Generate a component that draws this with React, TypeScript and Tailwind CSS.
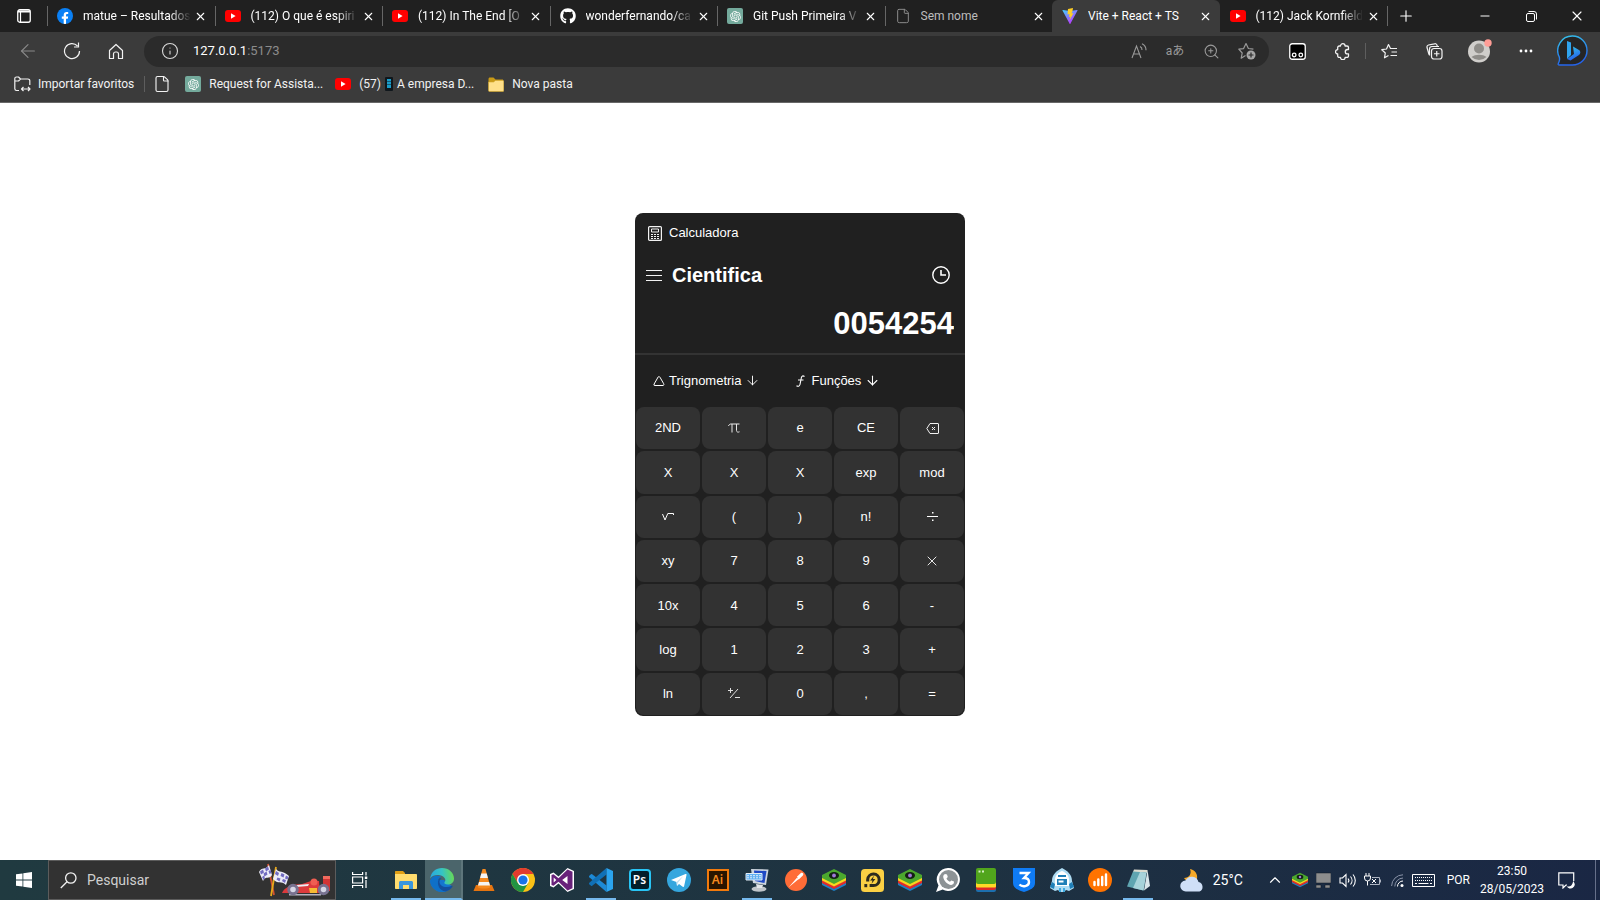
import type { ReactNode } from "react";
import { ArrowLeft, ArrowDown, File, X, Plus, Minus, Info, ZoomIn, ChevronUp, Triangle } from "lucide-react";
import { FaGithub, FaFacebookF } from "react-icons/fa";
import { RiOpenaiFill } from "react-icons/ri";

/* ---------- browser icons ---------- */

const YouTube = () => (
  <svg width="16" height="12" viewBox="0 0 16 12" aria-hidden="true">
    <rect width="16" height="12" rx="3" fill="#ff0000" />
    <path d="M6 3.3v5.4L10.6 6z" fill="#fff" />
  </svg>
);

const Facebook = () => (
  <span className="flex size-4 items-end justify-center overflow-hidden rounded-full bg-[#0a80f5] text-white">
    <FaFacebookF size={12} />
  </span>
);

const OpenAi = () => (
  <span className="flex size-4 items-center justify-center rounded-xs bg-[#74aa9c] text-white">
    <RiOpenaiFill size={13} />
  </span>
);

const Vite = () => (
  <svg width="16" height="16" viewBox="0 0 32 32" aria-hidden="true">
    <defs>
      <linearGradient id="vite-a" x1="0" y1="0" x2="0.6" y2="1">
        <stop offset="0" stopColor="#41d1ff" />
        <stop offset="1" stopColor="#bd34fe" />
      </linearGradient>
    </defs>
    <path d="M1 5l14 26a1 1 0 0 0 2 0L31 5c.5-1-.3-1.300-1-1.200L16 6 2 3.800C1.200 3.700.5 4.200 1 5z" fill="url(#vite-a)" />
    <path d="M22 0l-10 2-1 11 4-1-1 6 3-1-2 8 8-15-4 1 2-5z" fill="#ffcf25" />
  </svg>
);

const TabMenuIcon = () => (
  <svg width="14" height="14" viewBox="0 0 14 14" fill="none" stroke="#fff" aria-hidden="true">
    <rect x="0.75" y="0.75" width="12.500" height="12.500" rx="2" strokeWidth="1.300" />
    <path d="M1 2.500h12" strokeWidth="2" />
    <path d="M3.500 3v10" strokeWidth="1.200" />
  </svg>
);

const RestoreIcon = () => (
  <svg width="11" height="11" viewBox="0 0 11 11" fill="none" stroke="#fff" aria-hidden="true">
    <rect x="0.5" y="2.500" width="8" height="8" rx="1.500" />
    <path d="M2.500 .5h5.500a2.500 2.500 0 0 1 2.500 2.500v5.500" />
  </svg>
);

const ReloadIcon = () => (
  <svg width="18" height="18" viewBox="0 0 18 18" fill="none" stroke="#f2f2f2" strokeWidth="1.200" aria-hidden="true">
    <path d="M16.500 9A7.500 7.500 0 1 1 14.500 4M15.500 .5v4.500h-4.500" />
  </svg>
);

const HomeIcon = () => (
  <svg width="16" height="17" viewBox="0 0 16 17" fill="none" stroke="#f2f2f2" strokeWidth="1.200" strokeLinejoin="round" aria-hidden="true">
    <path d="M1.500 7.500L8 1.500l6.500 6v8h-4V11a2 2 0 0 0-2-2h-1a2 2 0 0 0-2 2v4.500h-4z" />
  </svg>
);

const ReadAloudIcon = () => (
  <svg width="17" height="16" viewBox="0 0 17 16" fill="none" stroke="#9a9a9a" strokeWidth="1.100" aria-hidden="true">
    <path d="M1 15L5.500 3 10 15M2.700 11h5.700M9 3.500a3.500 3.500 0 0 1 2 3.500M11 .8a7 7 0 0 1 4 6.500" />
  </svg>
);

const StarAddIcon = () => (
  <svg width="18" height="18" viewBox="0 0 18 18" fill="none" stroke="#9a9a9a" strokeWidth="1.200" strokeLinejoin="round" aria-hidden="true">
    <path d="M7.500 13.500l-4.300 2.700 1-5.200L.8 7.200l4.800-.6L8 1.500l2.400 5 5 .7" />
    <circle cx="13" cy="13" r="4.500" fill="#a6a6a6" stroke="none" />
    <path d="M13 10.500v5M10.500 13h5" stroke="#2b2b2b" />
  </svg>
);

const ExtensionIcon = () => (
  <svg width="17" height="17" viewBox="0 0 17 17" aria-hidden="true">
    <rect x="0.75" y="0.75" width="15.500" height="15.500" rx="2.500" fill="#000" stroke="#fff" strokeWidth="1.300" />
    <g fill="none" stroke="#fff" strokeWidth="1.300">
      <circle cx="5.200" cy="12" r="1.800" />
      <circle cx="11.800" cy="12" r="1.800" />
    </g>
  </svg>
);

const PuzzleIcon = () => (
  <svg width="15" height="17" viewBox="0 0 15 17" fill="none" stroke="#f2f2f2" strokeWidth="1.300" strokeLinejoin="round" aria-hidden="true">
    <path d="M5.500 3a2.300 2.300 0 0 1 4.600 0H12a1.500 1.500 0 0 1 1.500 1.500V6.500h-1a2.200 2.200 0 0 0 0 4.400h1v2a1.500 1.500 0 0 1-1.500 1.500h-1.900a2.300 2.300 0 0 1-4.600 0H4.200a1.500 1.500 0 0 1-1.500-1.500V11a2.200 2.200 0 0 1 0-4.400V4.500A1.500 1.500 0 0 1 4.200 3z" />
  </svg>
);

const FavoritesIcon = () => (
  <svg width="17" height="16" viewBox="0 0 17 16" fill="none" stroke="#f2f2f2" strokeWidth="1.200" strokeLinejoin="round" aria-hidden="true">
    <path d="M7.500 12.500l-4 2.300.8-4.800L.8 6.700l4.700-.7L7.500 1.500l2 4h6.500M10.500 9H16M9.500 12.500H16" />
  </svg>
);

const CollectionsIcon = () => (
  <svg width="17" height="17" viewBox="0 0 17 17" fill="none" stroke="#f2f2f2" strokeWidth="1.200" aria-hidden="true">
    <rect x="5.500" y="5.500" width="10.500" height="10.500" rx="2.500" />
    <path d="M10.750 8v5.500M8 10.750h5.500M3 11.500L1 4.500A2.200 2.200 0 0 1 2.500 2L8.500.8A2 2 0 0 1 11 2.200l.3 1.300M3.500 12.500V6a2.500 2.500 0 0 1 2.500-2.500h7" />
  </svg>
);

const Avatar = () => (
  <svg width="24" height="24" viewBox="0 0 24 24" aria-hidden="true">
    <circle cx="11" cy="12.500" r="11" fill="#d0cecb" />
    <circle cx="11" cy="9.500" r="5" fill="#8f8d89" />
    <path d="M3.500 18c4-3 11-3 15 0a11 11 0 0 1-15 0z" fill="#8f8d89" />
    <circle cx="20" cy="4" r="3.700" fill="#ff9d96" />
  </svg>
);

const Bing = () => (
  <svg width="31" height="32" viewBox="0 0 31 32" aria-hidden="true">
    <defs>
      <linearGradient id="bing-a" x1="0" y1="0" x2="0.3" y2="1">
        <stop offset="0" stopColor="#36c6ea" />
        <stop offset="1" stopColor="#2463eb" />
      </linearGradient>
    </defs>
    <path d="M15.500 1a14.500 14.500 0 1 1 0 29H2c-1 0-1-1-.6-1.600 1.300-2.400 1.600-3.900.9-6.400A14.500 14.500 0 0 1 15.500 1z" fill="#252525" stroke="url(#bing-a)" strokeWidth="1.400" />
    <path d="M10 6l4 1.500V20l-4 4z" fill="#2fa4ef" />
    <path d="M16 11.500l6 3.500c2 1.500 1.500 4 0 5l-8.500 5.500L10 24l7-5z" fill="url(#bing-a)" />
  </svg>
);

const ImportIcon = () => (
  <svg width="17" height="16" viewBox="0 0 17 16" fill="none" stroke="#f2f2f2" strokeWidth="1.200" strokeLinejoin="round" aria-hidden="true">
    <path d="M5 14.500H2.500A1.800 1.800 0 0 1 .8 12.800V2.500C.8 1.500 1.500 1 2.500 1h2L6.500 3H14a1.800 1.800 0 0 1 1.800 1.800V9M1 5h3.500l2-2M7.500 13H16M9.500 11l-2 2 2 2M14 11l2 2-2 2" />
  </svg>
);

const FolderIcon = () => (
  <svg width="16" height="15" viewBox="0 0 16 15" aria-hidden="true">
    <path d="M.5 2c0-.8.5-1.500 1.500-1.500h3.500l2 2H15v3H.5z" fill="#c99a16" />
    <path d="M.5 5h5l2-1.500H15c.5 0 .8.300.8.8V13.500c0 .5-.3 1-.8 1H1.500c-.6 0-1-.5-1-1z" fill="#ffe08a" stroke="#d1a62b" strokeWidth="0.600" />
  </svg>
);

const PhoneIcon = () => (
  <svg width="8" height="14" viewBox="0 0 8 14" aria-hidden="true">
    <rect width="8" height="14" rx="1" fill="#10171c" />
    <path d="M2 2h4v2.500H2zM2 5h4v2.500H2zM2 8h4v3H2z" fill="#1a9cc9" />
  </svg>
);

/* ---------- taskbar icons ---------- */

const Svg = ({ children, size = 24, box = 24 }: { children: ReactNode; size?: number; box?: number }) => (
  <svg width={size} height={size} viewBox={`0 0 ${box} ${box}`} aria-hidden="true">
    {children}
  </svg>
);

const Explorer = () => (
  <Svg>
    <path d="M1 4c0-.6.4-1 1-1h7l2 2v4H1z" fill="#e09f15" />
    <path d="M1 6h21c.5 0 1 .4 1 1v13c0 .6-.5 1-1 1H2c-.6 0-1-.4-1-1z" fill="#ffdc6e" />
    <path d="M5 21v-6.500c0-.8.7-1.500 1.500-1.500h11c.8 0 1.500.7 1.500 1.500V21h-4v-4H9v4z" fill="#3a96dd" />
  </Svg>
);

const Edge = () => (
  <Svg>
    <defs>
      <linearGradient id="edge-a" x1="0" y1="0.400" x2="1" y2="0.300">
        <stop offset="0" stopColor="#28a9e0" />
        <stop offset="0.500" stopColor="#35c3c5" />
        <stop offset="1" stopColor="#6ada50" />
      </linearGradient>
    </defs>
    <path d="M0 12A12 12 0 0 0 12 24c4.500 0 8-2 10.300-5.500L14 12z" fill="#1476cf" />
    <path d="M.2 10.500C1 4 6 0 12 0c7 0 12 5 12 10.500 0 4-3 6-6.200 6-2.800 0-4-1.200-3.300-2.200 1-1.300 1-2.300.5-3.500C13.500 7 4 5 .2 10.500z" fill="url(#edge-a)" />
    <path d="M8.500 11c-2.500 5.500 1 11.500 7 12.300C9 25.500 2 21 .3 14.500-.5 8 7 6.500 11.500 8.500 10 9 9 9.800 8.500 11z" fill="#0f70c8" />
    <path d="M8.500 11.500c-2 5 1 11.500 7 12 3-.7 5.500-2.500 7-5 .3-.6-.2-1-.7-.7-6 3-12.500.5-12.300-4.300 0-1.500 1-2.500 2-3-1.300-.5-2.500 0-3 1z" fill="#134f9e" />
  </Svg>
);

const Vlc = () => (
  <Svg>
    <path d="M4 17h16l2.500 6H1.500z" fill="#e57410" />
    <path d="M10.500 1h3l5 18c-2 2-11 2-13 0z" fill="#f58a1f" />
    <path d="M9.300 5.500h5.400l1.200 4.500H8.100zM7 14h10l1 3.500H6z" fill="#f4f4f4" />
  </Svg>
);

const Chrome = () => (
  <Svg>
    <circle cx="12" cy="12" r="12" fill="#fbc116" />
    <path d="M12 6h10.400A12 12 0 0 0 1.600 6l5.200 9z" fill="#e33b2e" />
    <path d="M1.600 6A12 12 0 0 0 12 24l5.200-9L12 17.500 6.800 15z" fill="#229342" />
    <circle cx="12" cy="12" r="6" fill="#fff" />
    <circle cx="12" cy="12" r="4.600" fill="#1a73e8" />
  </Svg>
);

const VisualStudio = () => (
  <Svg>
    <path d="M17.500 0L24 3v18l-6.500 3-9-8.500-5 4L0 18V6l3.500-1.500 5 4z" fill="#fff" />
    <path d="M17.500 1.500l5 2.300v16.400l-5 2.300-9-8.700-5 4L1.500 17V7l2-.8 5 4zM17.500 8l-5.300 4 5.300 4zM3.700 9.500v5l2.600-2.500z" fill="#68217a" fillRule="evenodd" />
  </Svg>
);

const VsCode = () => (
  <Svg>
    <path d="M2 6.300L.3 7.800a1 1 0 0 0 0 1.400L17.500 24v-6.500L3.200 6.300a1 1 0 0 0-1.200 0z" fill="#1d8ad6" />
    <path d="M2 17.700L.3 16.200a1 1 0 0 1 0-1.400L17.500 0v6.500L3.200 17.700a1 1 0 0 1-1.200 0z" fill="#1070b6" />
    <path d="M17.500 0L24 3v18l-6.500 3z" fill="#2ba4ef" />
  </Svg>
);

const AdobeIcon = ({ text, variant }: { text: string; variant: "ps" | "ai" }) => (
  <span
    className={
      variant === "ps"
        ? "flex size-[22px] items-center justify-center rounded-sm border-2 border-[#29c5f6] bg-[#021e2b] font-['Noto_Sans',sans-serif] text-xs font-semibold text-white"
        : "flex size-[22px] items-center justify-center border-2 border-[#f27a0c] bg-[#2a1500] font-['Noto_Sans',sans-serif] text-xs font-semibold text-[#f68a1f]"
    }
  >
    {text}
  </span>
);

const Telegram = () => (
  <Svg>
    <circle cx="12" cy="12" r="12" fill="#35a6de" />
    <path d="M4 12l14.500-6c.7-.2 1.200.2 1 1l-2.400 11.200c-.2.800-.7 1-1.400.6L12 16l-2 2-.5-4z" fill="#fff" />
    <path d="M9.500 14l7-6.300-5.700 7.300L10 18z" fill="#c4dfee" />
  </Svg>
);

const Computer = () => (
  <Svg>
    <path d="M6 1l17.500.5L21 17 8 15z" fill="#cdd5de" />
    <path d="M9 2.500l12.500.5-2 12L10 13z" fill="#1e49c4" />
    <path d="M1 5.500h16V12H1z" fill="#5fb0f3" stroke="#e2edf7" />
    <path d="M2 7.700h14M2 9.800h14" stroke="#e2edf7" strokeDasharray="2 1" />
    <ellipse cx="14" cy="21" rx="7.500" ry="2.800" fill="#bfc4c9" />
    <path d="M11 16l7 1-1 3h-5z" fill="#e3e6e9" />
  </Svg>
);

const Postman = () => (
  <Svg size={22}>
    <circle cx="12" cy="12" r="12" fill="#ff6c37" />
    <path d="M4 20L13 9.500l2 1.500zM13 8.500l4-4c2-1.500 4 .5 2.500 2.500L15 11.500z" fill="#fff" />
  </Svg>
);

const BlueStacks = ({ size = 24 }: { size?: number }) => (
  <Svg size={size}>
    <path d="M0 14.500l12 6 12-6v2.500l-12 6L0 17z" fill="#1d7fc4" />
    <path d="M0 12l12 6 12-6v3l-12 6-12-6z" fill="#e22b2b" />
    <path d="M0 9l12 6 12-6v3.500l-12 6-12-6z" fill="#f8d51f" />
    <path d="M0 7l12-6 12 6v3l-12 6-12-6z" fill="#4ba82e" />
    <ellipse cx="12" cy="7.500" rx="5" ry="3.400" fill="#132014" />
    <circle cx="12" cy="7.500" r="1.900" fill="#9f79d8" />
  </Svg>
);

const LdPlayer = () => (
  <Svg size={23}>
    <rect width="24" height="24" rx="4" fill="#fbd044" />
    <path d="M7 13V11a6 6 0 1 1 6 6.300H9" fill="none" stroke="#2d2a1e" strokeWidth="3.200" />
    <path d="M13.500 7l-4 5h2.500l-1 3.500 4-5h-2.500z" fill="#2d2a1e" />
    <path d="M3.500 15.700h3v3.300h-3z" fill="#2d2a1e" />
  </Svg>
);

const WhatsApp = () => (
  <Svg>
    <path d="M12.500 0a11.500 11.500 0 1 1-5.800 21.500L0 24l2.500-6.500A11.500 11.500 0 0 1 12.500 0z" fill="#fff" />
    <circle cx="12.500" cy="11.500" r="9.500" fill="#8d9396" />
    <path d="M9 6l2 .5.800 2.500-1.300 1.500c.8 1.700 2 2.700 3.500 3.300l1.300-1.400 2.700 1.200c.2 1.900-1 3.300-2.800 3.400-4-.5-7.500-4.500-8-8C7.200 7.500 8 6.300 9 6z" fill="#fff" />
  </Svg>
);

const GreenStack = () => (
  <Svg>
    <rect x="2" y="15" width="20" height="9" rx="2" fill="#1d6fae" />
    <rect x="2" y="14" width="20" height="8" rx="2" fill="#dc2929" />
    <rect x="2" y="12" width="20" height="7.500" rx="1" fill="#ffd926" />
    <rect x="2" y="0" width="20" height="16" rx="2" fill="#51a51c" />
    <path d="M4.500 2.500h2v2h-2zM8 2.500h2v2H8z" fill="#d7f0c5" />
  </Svg>
);

const Three = () => (
  <Svg>
    <path d="M1 0h22v15c0 5-5 7-11 9C6 22 1 20 1 15z" fill="#0f7bf4" />
    <path d="M7.500 5h9l-4.500 5c3.500 0 5 1.800 5 4 0 4.500-6.500 5.500-9.500 2.500" fill="none" stroke="#fff" strokeWidth="2.400" />
  </Svg>
);

const Rocket = () => (
  <Svg>
    <path d="M12 0c6 3 10 7 10 13l2 7-5 3-3-1-2 2h-4l-2-2-3 1-5-3 2-7C2 7 6 3 12 0z" fill="#aedcf4" />
    <path d="M12 3c5 2 7 5 7 9v6H5v-6c0-4 2-7 7-9z" fill="#fff" />
    <path d="M8 7h8v2H8zM7 11h10v6H7zM2 14l3 2-1 5-4-2zM22 14l-3 2 1 5 4-2z" fill="#1f7fb8" />
    <path d="M8.500 12.500h5v2h-5z" fill="#fff" />
    <path d="M9 20h2v4H9zM13 20h2v4h-2z" fill="#3faae0" />
  </Svg>
);

const BarsIcon = () => (
  <Svg>
    <circle cx="12" cy="12" r="12" fill="#ff7300" />
    <path d="M6.500 14v3M10.300 11.500v5.500M14.200 9v8M18 6.500V17" stroke="#fff" strokeWidth="2.400" strokeLinecap="round" />
  </Svg>
);

const Notepad = () => (
  <Svg>
    <path d="M8 1.500l13.500 .5-.5 3L7 4z" fill="#dcdcd0" />
    <path d="M21.500 2L24 18l-6 4.500z" fill="#d9e6ea" />
    <path d="M1 18.500L7 3.500l13.500 1-3 18z" fill="#5fa5b1" />
    <path d="M14 4l6.500.5-3 18L7 20z" fill="#a7d3da" />
  </Svg>
);

const RaceArt = () => (
  <svg width="72" height="34" viewBox="0 0 72 34" aria-hidden="true">
    <path d="M9 1l6 31" stroke="#d35230" strokeWidth="1.800" />
    <path d="M17 4l-5 29" stroke="#e8a91b" strokeWidth="1.800" />
    <path d="M10 2C6 8 3 3 0 9l4 9c3-6 6-1 9-6z" fill="#ececf8" />
    <path d="M17 6c3 4 7 1 13 7l-3 9c-5-5-8 0-13-6z" fill="#ececf8" />
    <path d="M1 8.500l3-2 1 3-3 2zM6 5.500l3-2 1 3-3 2zM4.500 10.500l3-2 1 3-3 2zM9.500 8l2-1 1 3-2 1zM3 14l2-1.500 1 3-1.500 1.500zM17 8l3 2-1 3-3-2zM22.500 10l3 1.500-1 3-3-1.500zM18.500 14.500l3 1-1 3-3-2zM24 16l3 1-1 3-3-2zM27 12.500l2.500 1.500-1 2.500-2.500-1z" fill="#716bc0" />
    <path d="M23 30c2-6 12-9 20-9l9-3h8l1 12H25z" fill="#dc3a3c" />
    <path d="M38 22l12-1-1 2-12 1z" fill="#ecebf2" />
    <path d="M50 25h8v5h-7z" fill="#f7bb32" />
    <path d="M64 14h7v14h-7z" fill="#d23334" />
    <path d="M64 13h7v3h-7z" fill="#f26a5d" />
    <circle cx="55" cy="19" r="3.500" fill="#ef5e52" />
    <path d="M30 31h32v1.500H30z" fill="#b3b2be" />
    <g fill="#d7d6e5" stroke="#78718f" strokeWidth="3">
      <circle cx="34" cy="26.500" r="4.300" />
      <circle cx="64.500" cy="26.500" r="4.300" />
    </g>
  </svg>
);

const WindowsLogo = () => (
  <svg width="16" height="16" viewBox="0 0 16 16" fill="#fff" aria-hidden="true">
    <path d="M0 2.300L6.500 1.400v6.200H0zM7.300 1.300L16 0v7.600H7.300zM0 8.400h6.500v6.200L0 13.700zM7.300 8.400H16V16l-8.700-1.300z" />
  </svg>
);

const SearchIcon = () => (
  <svg width="17" height="17" viewBox="0 0 17 17" fill="none" stroke="#f2f2f2" strokeWidth="1.300" aria-hidden="true">
    <circle cx="10.800" cy="6" r="5.200" />
    <path d="M7 9.800L.8 16" />
  </svg>
);

const TaskViewIcon = () => (
  <svg width="16" height="16" viewBox="0 0 16 16" fill="none" stroke="#fff" strokeWidth="1.200" aria-hidden="true">
    <path d="M.6 0v2.500h10V0M.6 16v-2.500h10V16M.6 5h10v6H.6zM14 0v3.500M14 8v8" />
    <path d="M12.800 4.500h2.500V7h-2.500z" fill="#fff" stroke="none" />
  </svg>
);

const Weather = () => (
  <svg width="25" height="24" viewBox="0 0 25 24" aria-hidden="true">
    <path d="M10 1c2 5-1 9-6 9 2 4 9 6 13 1C18 6 15 2 10 1z" fill="#f6a929" />
    <path d="M6 23.500a5.500 5.500 0 0 1-.5-11 7 7 0 0 1 13 1.500 5 5 0 0 1 1 9.500z" fill="#cfdff7" />
  </svg>
);

const SoundIcon = () => (
  <svg width="17" height="15" viewBox="0 0 17 15" fill="none" stroke="#fff" strokeWidth="1.100" aria-hidden="true">
    <path d="M1 5h2.500L7 1.500v12L3.500 10H1zM9 5.500a3 3 0 0 1 0 4M11.500 3.500a6 6 0 0 1 0 8M14 1.500a9 9 0 0 1 0 12" />
  </svg>
);

const BatteryIcon = () => (
  <svg width="17" height="14" viewBox="0 0 17 14" fill="none" stroke="#aeb5c2" aria-hidden="true">
    <path d="M2 0v3M5 0v3M.5 3h6v2a3 3 0 0 1-6 0zM3.500 8v4.500" stroke="#fff" />
    <path d="M8 4.500h7.500v7H6M16.500 6.500v3" />
    <path d="M8 6l4 4M12 6l-4 4" stroke="#fff" />
  </svg>
);

const WifiIcon = () => (
  <svg width="13" height="13" viewBox="0 0 13 13" fill="none" aria-hidden="true">
    <path d="M.6 12A11.400 11.400 0 0 1 12 .8M3.800 12.500A8.500 8.500 0 0 1 12 4" stroke="#8a93a8" />
    <path d="M6.500 12.500A5.500 5.500 0 0 1 12 7" stroke="#fff" />
    <circle cx="11" cy="11.500" r="1.500" fill="#fff" />
  </svg>
);

const KeyboardIcon = () => (
  <svg width="23" height="13" viewBox="0 0 23 13" fill="none" stroke="#fff" aria-hidden="true">
    <path d="M.5.5h22v12H.5z" />
    <path d="M3 3.500h17M3 6.500h17" strokeDasharray="1 1" />
    <path d="M3 9.500h2M6.500 9.500h10M18 9.500h2" />
  </svg>
);

const NotificationIcon = () => (
  <svg width="17" height="17" viewBox="0 0 17 17" fill="none" stroke="#fff" strokeWidth="1.200" aria-hidden="true">
    <path d="M9 13H8l-3 3v-3H.8V.8h14.900V9" />
    <path d="M15.500 10.500a3.500 3.500 0 0 1-5 4.700c2.500 0 4.300-1.700 5-4.700z" fill="#fff" stroke="#fff" />
  </svg>
);

/* ---------- calculator icons ---------- */

const CalculatorIcon = () => (
  <svg width="14" height="15" viewBox="0 0 14 15" fill="none" stroke="#f2f2f2" aria-hidden="true">
    <rect x="0.6" y="0.6" width="12.800" height="13.800" rx="1" strokeWidth="1.200" />
    <path d="M3.500 3h7v3h-7z" />
    <path d="M3 8.500h2M6 8.500h2M9 8.500h2M3 10.500h2M6 10.500h2M9 10.500h2M3 12.500h2M6 12.500h2M9 12.500h2" strokeWidth="1.200" />
  </svg>
);

const PiIcon = () => (
  <svg width="12" height="10" viewBox="0 0 12 10" fill="none" stroke="#e8e8e8" aria-hidden="true">
    <path d="M.5 3C1 1.500 2 1 3 1h8.500M4 1v8.500M8.500 1v6.500c0 1.500 1.500 2 3 1.300" />
  </svg>
);

const BackspaceIcon = () => (
  <svg width="13" height="11" viewBox="0 0 13 11" fill="none" stroke="#f0f0f0" aria-hidden="true">
    <path d="M4 .5h8a.5.5 0 0 1 .5.5v9a.5.500 0 0 1-.5.500H4L.8 5.500z" />
    <path d="M6 4l3 3M9 4L6 7" />
  </svg>
);

const RootIcon = () => (
  <svg width="12" height="8" viewBox="0 0 12 8" fill="none" stroke="#fff" aria-hidden="true">
    <path d="M.5 1l2.500 6L5.800.5h5.700v1.500" />
  </svg>
);

const DivideIcon = () => (
  <svg width="11" height="9" viewBox="0 0 11 9" aria-hidden="true">
    <path d="M0 4h11v1H0zM5 0h1.500v1.500H5zM5 7.500h1.500V9H5z" fill="#fff" />
  </svg>
);

const PlusMinusIcon = () => (
  <svg width="12" height="11" viewBox="0 0 12 11" fill="none" stroke="#e0e0e0" aria-hidden="true">
    <path d="M0 2.500h5M2.500 0v5M10 1L2 10M7 9.500h5" />
  </svg>
);

const ClockIcon = () => (
  <svg width="18" height="18" viewBox="0 0 18 18" fill="none" stroke="#fff" aria-hidden="true">
    <circle cx="9" cy="9" r="8.200" strokeWidth="1.400" />
    <path d="M9 4v5h5" strokeWidth="1.600" />
  </svg>
);

const FunctionIcon = () => (
  <svg width="9" height="12" viewBox="0 0 9 12" fill="none" stroke="#fff" strokeWidth="1.100" aria-hidden="true">
    <path d="M8.500 1.500C7 .3 5.800.8 5.400 2.500L4 9.500C3.600 11.300 2 11.800.5 10.800M2 5h5.500" />
  </svg>
);

/* ---------- data ---------- */

type Tab = { title: string; icon: ReactNode; active?: boolean; dim?: boolean };

const tabs: Tab[] = [
  { title: "matue – Resultados", icon: <Facebook /> },
  { title: "(112) O que é espiri", icon: <YouTube /> },
  { title: "(112) In The End [O", icon: <YouTube /> },
  { title: "wonderfernando/ca", icon: <FaGithub size={16} color="#fff" /> },
  { title: "Git Push Primeira V", icon: <OpenAi /> },
  { title: "Sem nome", icon: <File size={16} color="#8a8a8a" strokeWidth={1.500} />, dim: true },
  { title: "Vite + React + TS", icon: <Vite />, active: true },
  { title: "(112) Jack Kornfield", icon: <YouTube /> },
];

type Key = { name: string; face?: ReactNode };

const keys: Key[] = [
  { name: "2ND" }, { name: "pi", face: <PiIcon /> }, { name: "e" }, { name: "CE" }, { name: "Apagar", face: <BackspaceIcon /> },
  { name: "X" }, { name: "X" }, { name: "X" }, { name: "exp" }, { name: "mod" },
  { name: "Raiz", face: <RootIcon /> }, { name: "(" }, { name: ")" }, { name: "n!" }, { name: "Dividir", face: <DivideIcon /> },
  { name: "xy" }, { name: "7" }, { name: "8" }, { name: "9" }, { name: "Multiplicar", face: <X size={16} strokeWidth={1.500} color="#e8e8e8" /> },
  { name: "10x" }, { name: "4" }, { name: "5" }, { name: "6" }, { name: "-" },
  { name: "log" }, { name: "1" }, { name: "2" }, { name: "3" }, { name: "+" },
  { name: "ln" }, { name: "Mais ou menos", face: <PlusMinusIcon /> }, { name: "0" }, { name: "," }, { name: "=" },
];

type TaskApp = { name: string; icon: ReactNode; open?: boolean };

const leftApps: TaskApp[] = [
  { name: "VLC", icon: <Vlc /> },
  { name: "Chrome", icon: <Chrome /> },
  { name: "Visual Studio", icon: <VisualStudio /> },
  { name: "VS Code", icon: <VsCode />, open: true },
  { name: "Photoshop", icon: <AdobeIcon text="Ps" variant="ps" /> },
  { name: "Telegram", icon: <Telegram /> },
  { name: "Illustrator", icon: <AdobeIcon text="Ai" variant="ai" /> },
  { name: "Computador", icon: <Computer />, open: true },
];

const rightApps: TaskApp[] = [
  { name: "Postman", icon: <Postman /> },
  { name: "BlueStacks", icon: <BlueStacks /> },
  { name: "LDPlayer", icon: <LdPlayer /> },
  { name: "BlueStacks 5", icon: <BlueStacks /> },
  { name: "WhatsApp", icon: <WhatsApp /> },
  { name: "BlueStacks X", icon: <GreenStack /> },
  { name: "3uTools", icon: <Three /> },
  { name: "Foguete", icon: <Rocket /> },
  { name: "Estatísticas", icon: <BarsIcon /> },
  { name: "Bloco de Notas", icon: <Notepad />, open: true },
];

/* ---------- sections ---------- */

const IconButton = ({ label, className, children }: { label: string; className: string; children: ReactNode }) => (
  <button type="button" aria-label={label} className={`flex h-8 shrink-0 items-center justify-center ${className}`}>
    {children}
  </button>
);

function TabStrip() {
  return (
    <div className="flex h-8 items-center bg-[#202020]">
      <IconButton label="Menu de guias" className="w-[47px]"><TabMenuIcon /></IconButton>
      <div className="flex h-8 max-w-[1341px] flex-1" role="tablist">
        {tabs.map((tab, i) => (
          <div
            key={i}
            className={`flex h-8 min-w-0 flex-1 items-center ${tab.active ? "rounded-t-md bg-[#3b3b3b]" : ""}`}
          >
            {!tab.active && !tabs[i - 1]?.active && <span className="-mr-px h-5 w-px shrink-0 bg-[#666]" />}
            <button type="button" role="tab" aria-selected={!!tab.active} className="flex min-w-0 flex-1 items-center gap-2.5 pl-2.5 text-left">
              <span className="flex w-4 shrink-0 justify-center">{tab.icon}</span>
              <span className={`flex-1 overflow-hidden whitespace-nowrap ${tab.active ? "text-white" : tab.dim ? "text-[#bdbdbd]" : "text-white mask-r-from-80%"}`}>
                {tab.title}
              </span>
            </button>
            <button type="button" aria-label={`Fechar ${tab.title}`} className="flex w-6 shrink-0 justify-center pr-1">
              <X size={13} strokeWidth={2} />
            </button>
          </div>
        ))}
        <span className="h-5 w-px shrink-0 self-center bg-[#666]" />
      </div>
      <IconButton label="Nova guia" className="w-9"><Plus size={18} strokeWidth={1.500} /></IconButton>
      <div className="ml-auto flex">
        <IconButton label="Minimizar" className="w-[46px]"><Minus size={14} strokeWidth={1.700} /></IconButton>
        <IconButton label="Restaurar" className="w-[46px]"><RestoreIcon /></IconButton>
        <IconButton label="Fechar janela" className="w-[46px]"><X size={16} strokeWidth={1.700} /></IconButton>
      </div>
    </div>
  );
}

function Toolbar() {
  return (
    <div className="flex h-[38px] items-center pl-1.5 text-[#f2f2f2]">
      <IconButton label="Voltar" className="w-11"><ArrowLeft size={22} strokeWidth={1.200} color="#8a8a8a" /></IconButton>
      <IconButton label="Atualizar" className="w-11"><ReloadIcon /></IconButton>
      <IconButton label="Início" className="w-11"><HomeIcon /></IconButton>
      <div className="ml-1.5 flex h-[31px] flex-1 items-center rounded-full bg-[#2b2b2b] pl-[17px] pr-1">
        <Info size={18} strokeWidth={1.500} className="mr-3.5 text-[#d8d8d8]" />
        <input aria-label="Endereço" defaultValue="127.0.0.1" className="field-sizing-content bg-transparent text-[13px] text-white outline-none" />
        <span className="flex-1 text-[13px] text-[#8b8b8b]">:5173</span>
        <IconButton label="Ler em voz alta" className="w-9"><ReadAloudIcon /></IconButton>
        <IconButton label="Traduzir" className="w-9">
          <span className="text-xs text-[#9a9a9a]">aあ</span>
        </IconButton>
        <IconButton label="Zoom" className="w-9"><ZoomIn size={17} strokeWidth={1.500} color="#9a9a9a" /></IconButton>
        <IconButton label="Adicionar aos favoritos" className="w-9"><StarAddIcon /></IconButton>
      </div>
      <div className="flex shrink-0 items-center pl-1.5">
        <IconButton label="Extensão" className="w-[45px]"><ExtensionIcon /></IconButton>
        <IconButton label="Extensões" className="w-[45px]"><PuzzleIcon /></IconButton>
        <span className="h-4 w-px bg-[#5e5e5e]" />
        <IconButton label="Favoritos" className="w-[46px]"><FavoritesIcon /></IconButton>
        <IconButton label="Coleções" className="w-[45px]"><CollectionsIcon /></IconButton>
        <IconButton label="Perfil" className="w-[46px]"><Avatar /></IconButton>
        <IconButton label="Mais opções" className="w-[46px]">
          <svg width="14" height="4" viewBox="0 0 14 4" fill="#fff" aria-hidden="true">
            <circle cx="2" cy="2" r="1.400" /><circle cx="7" cy="2" r="1.400" /><circle cx="12" cy="2" r="1.400" />
          </svg>
        </IconButton>
        <IconButton label="Bing" className="w-[46px]"><Bing /></IconButton>
        <span className="w-[5px]" />
      </div>
    </div>
  );
}

function Bookmarks() {
  return (
    <nav aria-label="Favoritos" className="flex h-8 items-center pb-1 pl-3.5 text-[#f2f2f2]">
      <button type="button" className="flex items-center gap-[7px]"><ImportIcon />Importar favoritos</button>
      <span className="ml-2.5 mr-2 h-4 w-px bg-[#5e5e5e]" />
      <a href="#pagina" aria-label="Página"><File size={18} strokeWidth={1.500} /></a>
      <a href="#request" className="ml-3.5 flex items-center gap-2"><OpenAi />Request for Assista...</a>
      <a href="#empresa" className="ml-3 flex items-center"><YouTube /><span className="ml-2 mr-1">(57)</span><PhoneIcon /><span className="ml-1">A empresa D...</span></a>
      <a href="#pasta" className="ml-3.5 flex items-center gap-2"><FolderIcon />Nova pasta</a>
    </nav>
  );
}

function Calculator() {
  return (
    <section aria-label="Calculadora" className="flex w-[330px] flex-col rounded-lg bg-[#202020] pb-px font-['Liberation_Sans',Arial,sans-serif] text-[13px] text-white">
      <div className="flex h-10 items-center gap-[7px] pl-[13px]">
        <CalculatorIcon />
        <h1>Calculadora</h1>
      </div>
      <div className="flex h-[43px] items-center pl-[11px] pr-[15px]">
        <button type="button" aria-label="Menu" className="mr-2.5">
          <svg width="16" height="12" viewBox="0 0 16 12" stroke="#f2f2f2" aria-hidden="true"><path d="M0 1.500h16M0 6.500h16M0 11.500h16" /></svg>
        </button>
        <h2 className="text-xl font-bold">Cientifica</h2>
        <button type="button" aria-label="Histórico" className="ml-auto"><ClockIcon /></button>
      </div>
      <input
        aria-label="Visor"
        readOnly
        value="0054254"
        className="h-[59px] w-full border-b-2 border-[#333] bg-transparent pr-[11px] pb-0.5 text-right text-[31px] font-bold outline-none"
      />
      <div className="flex h-[52px] items-center pl-[18px]">
        <button type="button" className="flex items-center gap-1"><Triangle size={12} strokeWidth={2} />Trignometria<ArrowDown size={15} strokeWidth={1.500} /></button>
        <button type="button" className="ml-9 flex items-center gap-1.5"><FunctionIcon />Funções<ArrowDown size={15} strokeWidth={1.700} className="-ml-0.5" /></button>
      </div>
      <div className="grid h-[308px] grid-cols-5 grid-rows-7 gap-0.5 px-px">
        {keys.map((key, i) => (
          <button key={i} type="button" aria-label={key.name} className="flex items-center justify-center rounded-lg bg-[#323232]">
            {key.face ?? key.name}
          </button>
        ))}
      </div>
    </section>
  );
}

const AppButton = ({ app, wide }: { app: TaskApp; wide?: boolean }) => (
  <button
    type="button"
    aria-label={app.name}
    className={`flex h-10 shrink-0 flex-col items-center ${wide ? "w-[39px]" : "w-[38px]"}`}
  >
    <span className="flex h-[38px] items-center pt-0.5">{app.icon}</span>
    {app.open && <span className="h-0.5 w-[30px] bg-[#76b9ed]" />}
  </button>
);

function Taskbar() {
  return (
    <footer className="flex h-10 items-center bg-linear-to-r from-[#203a40] via-[#1e3241] via-60% to-[#1a2744] text-white">
      <IconButton label="Iniciar" className="w-12"><WindowsLogo /></IconButton>
      <label className="flex h-10 w-72 items-center border border-[#5c5c5c] bg-[#323232] pl-[11px] pr-1">
        <span className="mr-2.5"><SearchIcon /></span>
        <input aria-label="Pesquisar" placeholder="Pesquisar" className="w-0 flex-1 bg-transparent text-sm placeholder-[#cfcfcf] outline-none" />
        <RaceArt />
      </label>
      <IconButton label="Visão de tarefas" className="w-12"><TaskViewIcon /></IconButton>
      <div className="ml-0.5 flex">
        <AppButton wide app={{ name: "Explorador", icon: <Explorer />, open: true }} />
        <button type="button" aria-label="Edge" className="mr-px flex h-10 w-[38px] items-center border-r-2 border-b-2 border-r-[#5d757b] border-b-[#76b9ed] bg-[#4b656b] pl-[5px] pt-0.5">
          <Edge />
        </button>
        {leftApps.map((app) => <AppButton key={app.name} app={app} wide />)}
      </div>
      <div className="ml-px flex">
        {rightApps.map((app) => <AppButton key={app.name} app={app} />)}
      </div>
      <div className="ml-auto flex items-center">
        <button type="button" className="flex items-center gap-2 text-sm"><Weather />25°C</button>
        <button type="button" aria-label="Ícones ocultos" className="ml-[23px]"><ChevronUp size={18} strokeWidth={1.500} /></button>
        <span className="ml-2 flex items-center gap-2">
          <BlueStacks size={16} />
          <svg width="15" height="16" viewBox="0 0 15 16" aria-hidden="true">
            <path d="M0 1h15v10H0zM0 13h5v3H0zM9 13h5v3H9z" fill="#8d8d8d" stroke="#0f1522" strokeWidth="0.500" />
          </svg>
          <SoundIcon />
          <BatteryIcon />
        </span>
        <span className="ml-2.5 mr-2 flex items-center gap-2"><WifiIcon /><KeyboardIcon /></span>
        <button type="button" className="ml-1 text-xs">POR</button>
        <time className="ml-3 flex w-[60px] flex-col items-center text-xs leading-[18px]">
          <span>23:50</span>
          <span>28/05/2023</span>
        </time>
        <button type="button" aria-label="Notificações" className="ml-4 mr-5"><NotificationIcon /></button>
        <span className="mr-1 h-10 w-px bg-[#66708a]" />
      </div>
    </footer>
  );
}

export default function App() {
  return (
    <div className="flex min-h-screen flex-col bg-white font-[Roboto,'Noto_Sans_CJK_JP',sans-serif] text-xs text-white">
      <header className="border-b border-[#686868] bg-[#3b3b3b]">
        <TabStrip />
        <Toolbar />
        <Bookmarks />
      </header>
      <main className="flex flex-1 flex-col items-center pt-[110px]">
        <Calculator />
      </main>
      <Taskbar />
    </div>
  );
}
